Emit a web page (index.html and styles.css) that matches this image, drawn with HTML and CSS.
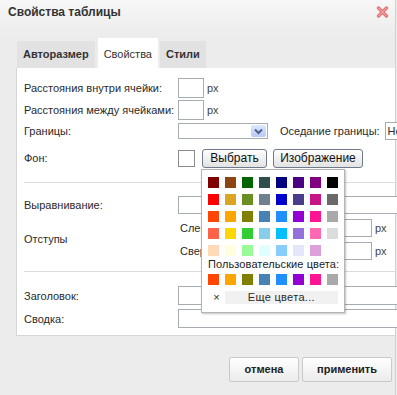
FILE: index.html
```html
<!DOCTYPE html>
<html lang="ru">
<head>
    <meta charset="UTF-8">
    <title>Свойства таблицы</title>
    <link rel="stylesheet" href="styles.css">
</head>
<body>
<div class="dialog">
    <div class="titlebar">
        <span class="title">Свойства таблицы</span>
        <span class="close">
            <svg width="13" height="12" viewBox="0 0 13 12">
                <path d="M2.5 2 L10.5 10 M10.5 2 L2.5 10" stroke="#e07476" stroke-width="3.4" stroke-linecap="round"/>
                <path d="M2.5 2 L10.5 10 M10.5 2 L2.5 10" stroke="#f5b9b9" stroke-width="1" stroke-linecap="round"/>
            </svg>
        </span>
    </div>

    <div class="tabs">
        <div class="tab">Авторазмер</div>
        <div class="tab active">Свойства</div>
        <div class="tab">Стили</div>
    </div>

    <div class="panel">
        <div class="row r-small">
            <span class="label">Расстояния внутри ячейки:</span>
            <span class="input num"></span><span class="unit">px</span>
        </div>
        <div class="row r-small">
            <span class="label">Расстояния между ячейками:</span>
            <span class="input num"></span><span class="unit">px</span>
        </div>
        <div class="row r-combo">
            <span class="label">Границы:</span>
            <span class="combo">
                <span class="arrow">
                    <svg width="15" height="13" viewBox="0 0 15 13">
                        <path d="M4 4.5 L7.5 8 L11 4.5" fill="none" stroke="#4a5f8a" stroke-width="2"/>
                    </svg>
                </span>
            </span>
            <span class="side-label">Оседание границы:</span>
            <span class="input collapse">Нет</span>
        </div>
        <div class="row r-bg">
            <span class="label">Фон:</span>
            <span class="color-box"></span>
            <span class="pick">
                <span class="btn-small pick-btn">Выбрать</span>
                <div class="palette">
                    <div class="swatches">
                        <i style="background:#800000"></i><i style="background:#8b4513"></i><i style="background:#006400"></i><i style="background:#2f4f4f"></i><i style="background:#000080"></i><i style="background:#4b0082"></i><i style="background:#800080"></i><i style="background:#000000"></i>
                        <i style="background:#ff0000"></i><i style="background:#daa520"></i><i style="background:#6b8e23"></i><i style="background:#708090"></i><i style="background:#0000cd"></i><i style="background:#483d8b"></i><i style="background:#c71585"></i><i style="background:#696969"></i>
                        <i style="background:#ff4500"></i><i style="background:#ffa500"></i><i style="background:#808000"></i><i style="background:#4682b4"></i><i style="background:#1e90ff"></i><i style="background:#9400d3"></i><i style="background:#ff1493"></i><i style="background:#a9a9a9"></i>
                        <i style="background:#ff6347"></i><i style="background:#ffd700"></i><i style="background:#32cd32"></i><i style="background:#87ceeb"></i><i style="background:#00bfff"></i><i style="background:#9370db"></i><i style="background:#ff69b4"></i><i style="background:#dcdcdc"></i>
                        <i style="background:#ffdab9"></i><i style="background:#ffffe0"></i><i style="background:#98fb98"></i><i style="background:#e0ffff"></i><i style="background:#87cefa"></i><i style="background:#e6e6fa"></i><i style="background:#dda0dd"></i><i style="background:#ffffff"></i>
                    </div>
                    <div class="custom-title">Пользовательские цвета:</div>
                    <div class="swatches custom">
                        <i style="background:#ff4500"></i><i style="background:#ffa500"></i><i style="background:#808000"></i><i style="background:#4682b4"></i><i style="background:#1e90ff"></i><i style="background:#9400d3"></i><i style="background:#ff1493"></i><i style="background:#a9a9a9"></i>
                    </div>
                    <div class="palette-foot">
                        <span class="clear">×</span>
                        <span class="more">Еще цвета...</span>
                    </div>
                </div>
            </span>
            <span class="btn-small image-btn">Изображение</span>
        </div>

        <div class="sep"></div>

        <div class="row r-align">
            <span class="label">Выравнивание:</span>
            <span class="input wide"></span>
        </div>
        <div class="row">
            <span class="label">Отступы</span>
            <div class="sub">
                <div class="sub-row">
                    <span class="sub-label">Слева</span>
                    <span class="input pad"></span><span class="unit">px</span>
                </div>
                <div class="sub-row">
                    <span class="sub-label">Сверху</span>
                    <span class="input pad"></span><span class="unit">px</span>
                </div>
            </div>
        </div>

        <div class="sep sep-2"></div>

        <div class="row r-text first">
            <span class="label">Заголовок:</span>
            <span class="input wide"></span>
        </div>
        <div class="row r-text">
            <span class="label">Сводка:</span>
            <span class="input wide"></span>
        </div>
    </div>

    <div class="footer">
        <span class="btn cancel">отмена</span>
        <span class="btn apply">применить</span>
    </div>
</div>
</body>
</html>
```

FILE: styles.css
```css
html, body {
    overflow: hidden;
}
body {
    margin: 0;
    background: #ececec;
    font: 11px "Liberation Sans", Arial, sans-serif;
    color: #2a2a2a;
}
.dialog {
    position: relative;
    width: 396px;
    height: 395px;
    box-sizing: border-box;
    border-right: 1px solid #d2d2d2;
    background: linear-gradient(#f7f7f7 0, #ececec 36px, #ececec 100%);
}
.titlebar {
    display: flex;
    justify-content: space-between;
    align-items: center;
    height: 24px;
    padding: 0 6px 0 8px;
}
.title {
    font-weight: bold;
    font-size: 12px;
    color: #333;
}
.close svg {
    display: block;
}
.tabs {
    display: flex;
    align-items: flex-end;
    height: 30px;
    margin-top: 14px;
    padding-left: 17px;
}
.tab {
    height: 27px;
    line-height: 27px;
    padding: 0 6px;
    margin-right: 3px;
    background: #e2e2e2;
    font-weight: bold;
    color: #333;
}
.tab.active {
    padding-top: 3px;
    margin-right: 2px;
    background: #fff;
    font-weight: normal;
}
.panel {
    margin-left: 16px;
    padding: 9px 0 5px 7px;
    background: #fff;
    border-left: 1px solid #d6d6d6;
    border-bottom: 1px solid #d6d6d6;
}
.row {
    display: flex;
    align-items: center;
    white-space: nowrap;
}
.row > *,
.sub-row > * {
    flex: none;
}
.label {
    width: 154px;
}
.r-small {
    height: 22px;
}
.r-combo {
    height: 20px;
}
.r-bg {
    height: 34px;
}
.r-align {
    height: 22px;
    margin-top: 11px;
}
.r-text {
    height: 23px;
}
.r-text.first {
    margin-top: 12px;
}
.input {
    display: block;
    box-sizing: border-box;
    height: 20px;
    border: 1px solid #a5acb2;
    background: #fff;
}
.input.num {
    width: 26px;
}
.input.wide {
    width: 222px;
    height: 19px;
}
.r-align .input.wide {
    height: 18px;
}
.input.pad {
    width: 152px;
    height: 18px;
}
.input.collapse {
    width: 40px;
    height: 18px;
    margin-left: 5px;
    padding-left: 2px;
    line-height: 16px;
}
.unit {
    margin-left: 3px;
    color: #444;
}
.combo {
    display: flex;
    justify-content: flex-end;
    box-sizing: border-box;
    width: 90px;
    height: 16px;
    padding: 1px;
    border: 1px solid #a5acb2;
}
.arrow {
    width: 15px;
    height: 12px;
    border-radius: 2px;
    background: linear-gradient(#dfe8fd, #b5c9f4);
}
.arrow svg {
    display: block;
}
.side-label {
    margin-left: 12px;
}
.color-box {
    box-sizing: border-box;
    width: 17px;
    height: 17px;
    border: 1px solid #8a8a8a;
}
.pick {
    position: relative;
    margin-left: 7px;
}
.btn-small {
    display: block;
    box-sizing: border-box;
    height: 19px;
    line-height: 17px;
    text-align: center;
    border: 1px solid #6f7b8a;
    border-radius: 3px;
    background: linear-gradient(#fefefe, #e3e3e3);
    color: #111;
    font-size: 12px;
}
.pick-btn {
    width: 65px;
}
.image-btn {
    width: 90px;
    margin-left: 6px;
}
.sep {
    height: 1px;
    margin-top: 7px;
    background: #dcdcdc;
}
.sep-2 {
    margin-top: 9px;
}
.sub {
    display: flex;
    flex-direction: column;
}
.sub-row {
    display: flex;
    align-items: center;
    height: 23px;
}
.sub-label {
    width: 40px;
    padding-left: 2px;
}
.palette {
    position: absolute;
    top: 20px;
    left: -1px;
    z-index: 2;
    box-sizing: border-box;
    width: 144px;
    height: 144px;
    padding: 7px 6px;
    background: #fff;
    border: 1px solid #b4b4b4;
    box-shadow: 1px 1px 2px rgba(0, 0, 0, 0.25);
}
.swatches {
    display: grid;
    grid-template-columns: repeat(8, 11px);
    grid-auto-rows: 11px;
    gap: 6px;
}
.swatches i {
    display: block;
}
.custom-title {
    margin-top: 2px;
    line-height: 12px;
    font-size: 11px;
    letter-spacing: 0.1px;
    color: #222;
}
.swatches.custom {
    margin-top: 4px;
}
.palette-foot {
    display: flex;
    align-items: center;
    margin-top: 6px;
    height: 13px;
}
.clear {
    width: 17px;
    text-align: center;
    font-size: 11px;
}
.more {
    width: 115px;
    height: 13px;
    line-height: 13px;
    text-align: center;
    background: #f1f1f1;
    letter-spacing: 0.3px;
}
.footer {
    display: flex;
    justify-content: flex-end;
    gap: 3px;
    padding: 21px 3px 0 0;
}
.btn {
    box-sizing: border-box;
    height: 25px;
    line-height: 23px;
    text-align: center;
    font-weight: bold;
    color: #222;
    border: 1px solid #cacaca;
    border-radius: 2px;
    background: linear-gradient(#ffffff, #ebebeb);
}
.btn.cancel {
    width: 70px;
}
.btn.apply {
    width: 90px;
}
```
